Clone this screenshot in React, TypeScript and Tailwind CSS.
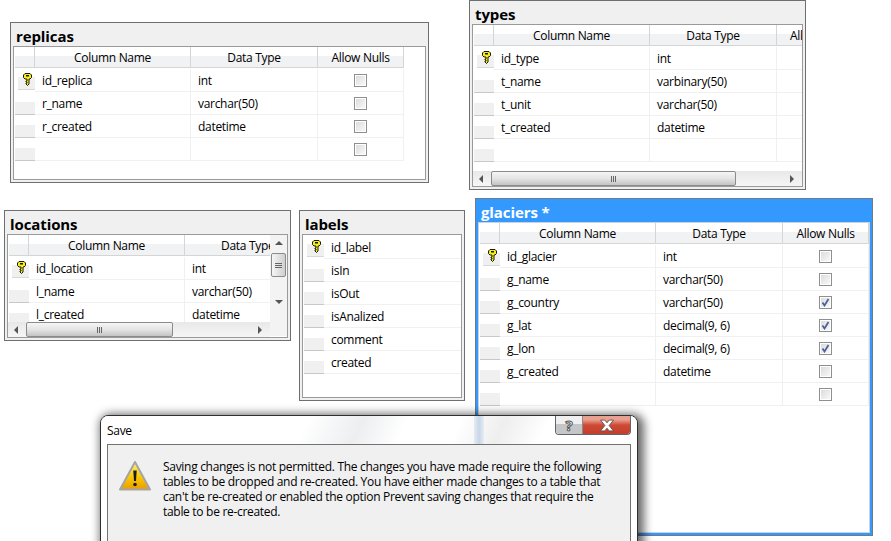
type Row = { name: string; type?: string; nulls?: "off" | "on" };

const replicaRows: Row[] = [
  { name: "id_replica", type: "int", nulls: "off" },
  { name: "r_name", type: "varchar(50)", nulls: "off" },
  { name: "r_created", type: "datetime", nulls: "off" },
  { name: "", type: "", nulls: "off" },
];
const typeRows: Row[] = [
  { name: "id_type", type: "int" },
  { name: "t_name", type: "varbinary(50)" },
  { name: "t_unit", type: "varchar(50)" },
  { name: "t_created", type: "datetime" },
  { name: "", type: "" },
];
const locationRows: Row[] = [
  { name: "id_location", type: "int" },
  { name: "l_name", type: "varchar(50)" },
  { name: "l_created", type: "datetime" },
];
const labelRows: Row[] = [
  { name: "id_label" },
  { name: "isIn" },
  { name: "isOut" },
  { name: "isAnalized" },
  { name: "comment" },
  { name: "created" },
];
const glacierRows: Row[] = [
  { name: "id_glacier", type: "int", nulls: "off" },
  { name: "g_name", type: "varchar(50)", nulls: "off" },
  { name: "g_country", type: "varchar(50)", nulls: "on" },
  { name: "g_lat", type: "decimal(9, 6)", nulls: "on" },
  { name: "g_lon", type: "decimal(9, 6)", nulls: "on" },
  { name: "g_created", type: "datetime", nulls: "off" },
  { name: "", type: "", nulls: "off" },
];

function KeyIcon() {
  return (
    <svg width="9" height="13" viewBox="0 0 9 13" className="shrink-0">
      <path
        d="M2 .5h5l1.500 1.500v2.500L7 6H6v5L4.500 12.500 3 11V10H4V9H3V8h1V6H2L.5 4.500V2z"
        fill="#f6ee1e"
        stroke="#1a1a00"
        strokeWidth="1"
      />
      <rect x="3" y="2" width="3" height="1.500" fill="#1a1a00" />
    </svg>
  );
}

function Check({ on }: { on: boolean }) {
  return (
    <div className="w-[13px] h-[13px] border border-[#8e8f8f] bg-white p-[1px]">
      <div className="w-full h-full bg-gradient-to-br from-[#dcdcdc] to-[#f8f8f8] relative">
        {on && (
          <svg width="9" height="9" viewBox="0 0 9 9" className="absolute left-0 top-0">
            <path d="M1.500 4.500L3.500 7.500L7.500 1" fill="none" stroke="#4a5f97" strokeWidth="1.700" />
          </svg>
        )}
      </div>
    </div>
  );
}

function Selector({ first }: { first: boolean }) {
  if (first) {
    return (
      <div className="w-[20px] h-full shrink-0 pl-[3px]">
        <div className="h-[21px] flex items-center justify-end pr-[3px] bg-gradient-to-b from-white from-40% to-[#f0f0f0] to-40% border-b border-[#d8d8d8]">
          <KeyIcon />
        </div>
      </div>
    );
  }
  return <div className="w-[20px] h-full shrink-0 bg-gradient-to-b from-white from-45% to-[#f0f0f0] to-45% border-b border-[#c8c8c8]" />;
}

function HeaderCell({ label, className }: { label: string; className: string }) {
  return (
    <div className={`h-full shrink-0 flex items-center justify-center pt-[1px] overflow-hidden whitespace-nowrap border-r border-[#d5d5d5] bg-gradient-to-b from-white from-45% to-[#f1f2f4] to-45% ${className}`}>
      {label}
    </div>
  );
}

function Grid({ rows, clip, showNulls, narrow }: { rows: Row[]; clip?: boolean; showNulls: boolean; narrow?: boolean }) {
  const typeWidth = narrow ? "w-[86px]" : "w-[127px]";
  return (
    <div className="pl-[1px] w-max">
      <div className="flex h-[21px] border-b border-[#d5d5d5]">
        <HeaderCell label="" className="w-[20px]" />
        <HeaderCell label="Column Name" className="w-[156px]" />
        {narrow ? (
          <div className="w-[86px] h-full shrink-0 overflow-hidden whitespace-nowrap flex items-center pl-[36px] pt-[1px] bg-gradient-to-b from-white from-45% to-[#f1f2f4] to-45%">Data Type</div>
        ) : (
          <HeaderCell label="Data Type" className={typeWidth} />
        )}
        {!narrow && (clip ? (
          <div className="w-[26px] h-full shrink-0 overflow-hidden whitespace-nowrap pl-[13px] pt-[1px] flex items-center bg-gradient-to-b from-white from-45% to-[#f1f2f4] to-45%">All</div>
        ) : (
          <HeaderCell label="Allow Nulls" className="w-[86px]" />
        ))}
      </div>
      <div className="h-[1px]" />
      {rows.map((r, i) => (
        <div key={i} className="flex h-[23px] items-stretch">
          <Selector first={i === 0} />
          <div className="w-[156px] shrink-0 pl-[7px] pt-[2px] flex items-center border-r border-b border-[#f0f0f0]">{r.name}</div>
          <div className={`${typeWidth} shrink-0 pl-[7px] pt-[2px] flex items-center border-r border-b border-[#f0f0f0]`}>{r.type}</div>
          {showNulls && (
            <div className="w-[86px] shrink-0 flex items-center justify-center border-r border-b border-[#f0f0f0]">
              {r.nulls && <Check on={r.nulls === "on"} />}
            </div>
          )}
          {clip && <div className="w-[26px] shrink-0 border-b border-[#f0f0f0]" />}
        </div>
      ))}
    </div>
  );
}

function LabelGrid({ rows }: { rows: Row[] }) {
  return (
    <div className="pl-[1px] pt-[1px]">
      {rows.map((r, i) => (
        <div key={i} className="flex h-[23px] items-stretch">
          <Selector first={i === 0} />
          <div className="flex-1 pl-[7px] pt-[2px] flex items-center border-b border-[#f0f0f0]">{r.name}</div>
        </div>
      ))}
    </div>
  );
}

function Arrow({ dir }: { dir: "l" | "r" | "u" | "d" }) {
  const d = { l: "M5 0v8L1 4z", r: "M1 0v8l4-4z", u: "M0 5h8L4 1z", d: "M0 1h8L4 5z" }[dir];
  return (
    <svg width="8" height="8" viewBox="0 0 8 8">
      <path d={d} fill="#555" />
    </svg>
  );
}

function HScroll({ thumb }: { thumb: string }) {
  return (
    <div className="flex h-[15px] items-stretch bg-gradient-to-b from-[#e8e8e8] to-[#f6f6f6]">
      <div className="w-[18px] shrink-0 flex items-center justify-center"><Arrow dir="l" /></div>
      <div className="flex-1">
        <div className={`${thumb} h-full rounded-[2px] border border-[#8b8b8b] bg-gradient-to-b from-[#f6f6f6] via-[#e4e4e4] to-[#c4c4c4] flex items-center justify-center gap-[1px]`}>
          <div className="w-[1px] h-[6px] bg-[#666]" />
          <div className="w-[1px] h-[6px] bg-[#666]" />
          <div className="w-[1px] h-[6px] bg-[#666]" />
        </div>
      </div>
      <div className="w-[18px] shrink-0 flex items-center justify-center"><Arrow dir="r" /></div>
    </div>
  );
}

function VScroll() {
  return (
    <div className="w-[17px] h-[101px] flex flex-col items-stretch bg-[#f3f3f3]">
      <div className="h-[18px] shrink-0 flex items-center justify-center"><Arrow dir="u" /></div>
      <div className="h-[24px] mx-[1px] rounded-[2px] border border-[#8b8b8b] bg-gradient-to-r from-[#f6f6f6] to-[#cfcfcf] flex flex-col items-center justify-center gap-[1px]">
        <div className="w-[7px] h-[1px] bg-[#666]" />
        <div className="w-[7px] h-[1px] bg-[#666]" />
        <div className="w-[7px] h-[1px] bg-[#666]" />
      </div>
      <div className="h-[44px] flex items-center justify-center pt-[8px]"><Arrow dir="d" /></div>
    </div>
  );
}

function Panel({ title, className, active, children }: { title: string; className: string; active?: boolean; children: React.ReactNode }) {
  return (
    <div className={`absolute flex flex-col border p-[2px] pt-0 ${active ? "bg-[#3399ff] border-[#6f7b88]" : "bg-[#f0f0f0] border-[#6f6f6f]"} ${className}`}>
      <div className={`h-[23px] shrink-0 pl-[3px] pt-[3px] text-[15px] leading-[21px] font-bold tracking-[-0.1px] ${active ? "text-white" : "text-black"}`}>{title}</div>
      <div className={`flex-1 min-h-0 relative overflow-hidden bg-white border ${active ? "border-[#c8d4e0]" : "border-[#9a9a9a]"}`}>{children}</div>
    </div>
  );
}

function Dialog() {
  return (
    <div className="absolute left-[100px] top-[415px] w-[538px] h-[150px] rounded-t-[8px] border border-[#2f2f2f] bg-white shadow-[3px_2px_10px_3px_rgba(0,0,0,0.6)] overflow-hidden">
      {/* glass streaks in the title bar */}
      <div className="absolute inset-x-0 top-0 h-[28px] bg-[linear-gradient(115deg,#ffffff_0%,#ffffff_38%,#eceef0_48%,#ffffff_56%,#ffffff_66%,#eeeeee_74%,#ffffff_82%)]" />
      <div className="absolute left-[373px] top-0 h-[28px] w-[10px] bg-gradient-to-r from-[#e6ecf3] via-[#c7d6e6] to-[#e6ecf3]" />
      <div className="relative flex h-[28px] items-center pl-[6px] pt-[2px]">Save</div>
      <div className="absolute right-[6px] top-0 flex h-[19px] rounded-b-[4px] border border-t-0 border-[#5f6670] overflow-hidden">
        <div className="w-[27px] flex items-center justify-center border-r border-[#8a8a8a] bg-gradient-to-b from-[#f0f0f0] from-45% to-[#c4c6c8] to-45% font-bold text-[15px] text-white [-webkit-text-stroke:1px_#555]">?</div>
        <div className="w-[47px] flex items-center justify-center bg-gradient-to-b from-[#e8a090] from-20% via-[#cf4a35] to-[#c23f2d]">
          <svg width="18" height="13" viewBox="0 0 16 12">
            <path d="M2 1h4l2 2.500L10 1h4l-4 5 4 5h-4L8 8.500 6 11H2l4-5z" fill="#fff" stroke="#5a4a4a" strokeWidth="0.800" />
          </svg>
        </div>
      </div>
      <div className="relative mx-[6px] h-[120px] border border-[#727272] bg-[#f0f0f0] flex gap-[12px] pl-[11px] pt-[14px]">
        <svg width="32" height="30" viewBox="0 0 32 30" className="shrink-0 mt-[2px]">
          <defs>
            <linearGradient id="warn" x1="0" y1="0" x2="0" y2="1">
              <stop offset="0" stopColor="#fff27a" />
              <stop offset="0.6" stopColor="#f8c400" />
              <stop offset="1" stopColor="#eb9c00" />
            </linearGradient>
          </defs>
          <path d="M16 1L31 28.500H1z" fill="url(#warn)" stroke="#a5a5a5" strokeWidth="2" strokeLinejoin="round" />
          <path d="M14.300 9.500h3.400L17 20h-2z" fill="#1c1c1c" />
          <circle cx="16" cy="23.500" r="1.800" fill="#1c1c1c" />
        </svg>
        <p className="w-[446px] leading-[15px]">
          Saving changes is not permitted. The changes you have made require the following tables to be dropped and re-created. You have either made changes to a table that can't be re-created or enabled the option Prevent saving changes that require the table to be re-created.
        </p>
      </div>
    </div>
  );
}

export default function App() {
  return (
    <div className="relative w-[891px] h-[541px] overflow-hidden bg-white text-[12px] leading-none tracking-[-0.3px] text-black font-['Open_Sans',sans-serif]">
      <Panel title="replicas" className="left-[10px] top-[22px] w-[419px] h-[161px]">
        <Grid rows={replicaRows} showNulls />
      </Panel>

      <Panel title="types" className="left-[469px] top-[0px] w-[337px] h-[190px]">
        <Grid rows={typeRows} showNulls={false} clip />
        <div className="absolute bottom-0 inset-x-0"><HScroll thumb="w-[245px]" /></div>
      </Panel>

      <Panel title="locations" className="left-[4px] top-[210px] w-[287px] h-[131px]">
        <Grid rows={locationRows} showNulls={false} narrow />
        <div className="absolute top-0 right-0"><VScroll /></div>
        <div className="absolute bottom-0 left-0 right-[17px]"><HScroll thumb="w-[147px]" /></div>
      </Panel>

      <Panel title="labels" className="left-[299px] top-[210px] w-[166px] h-[191px]">
        <LabelGrid rows={labelRows} />
      </Panel>

      <Panel title="glaciers *" active className="left-[475px] top-[198px] w-[398px] h-[338px]">
        <Grid rows={glacierRows} showNulls />
      </Panel>

      <Dialog />
    </div>
  );
}
